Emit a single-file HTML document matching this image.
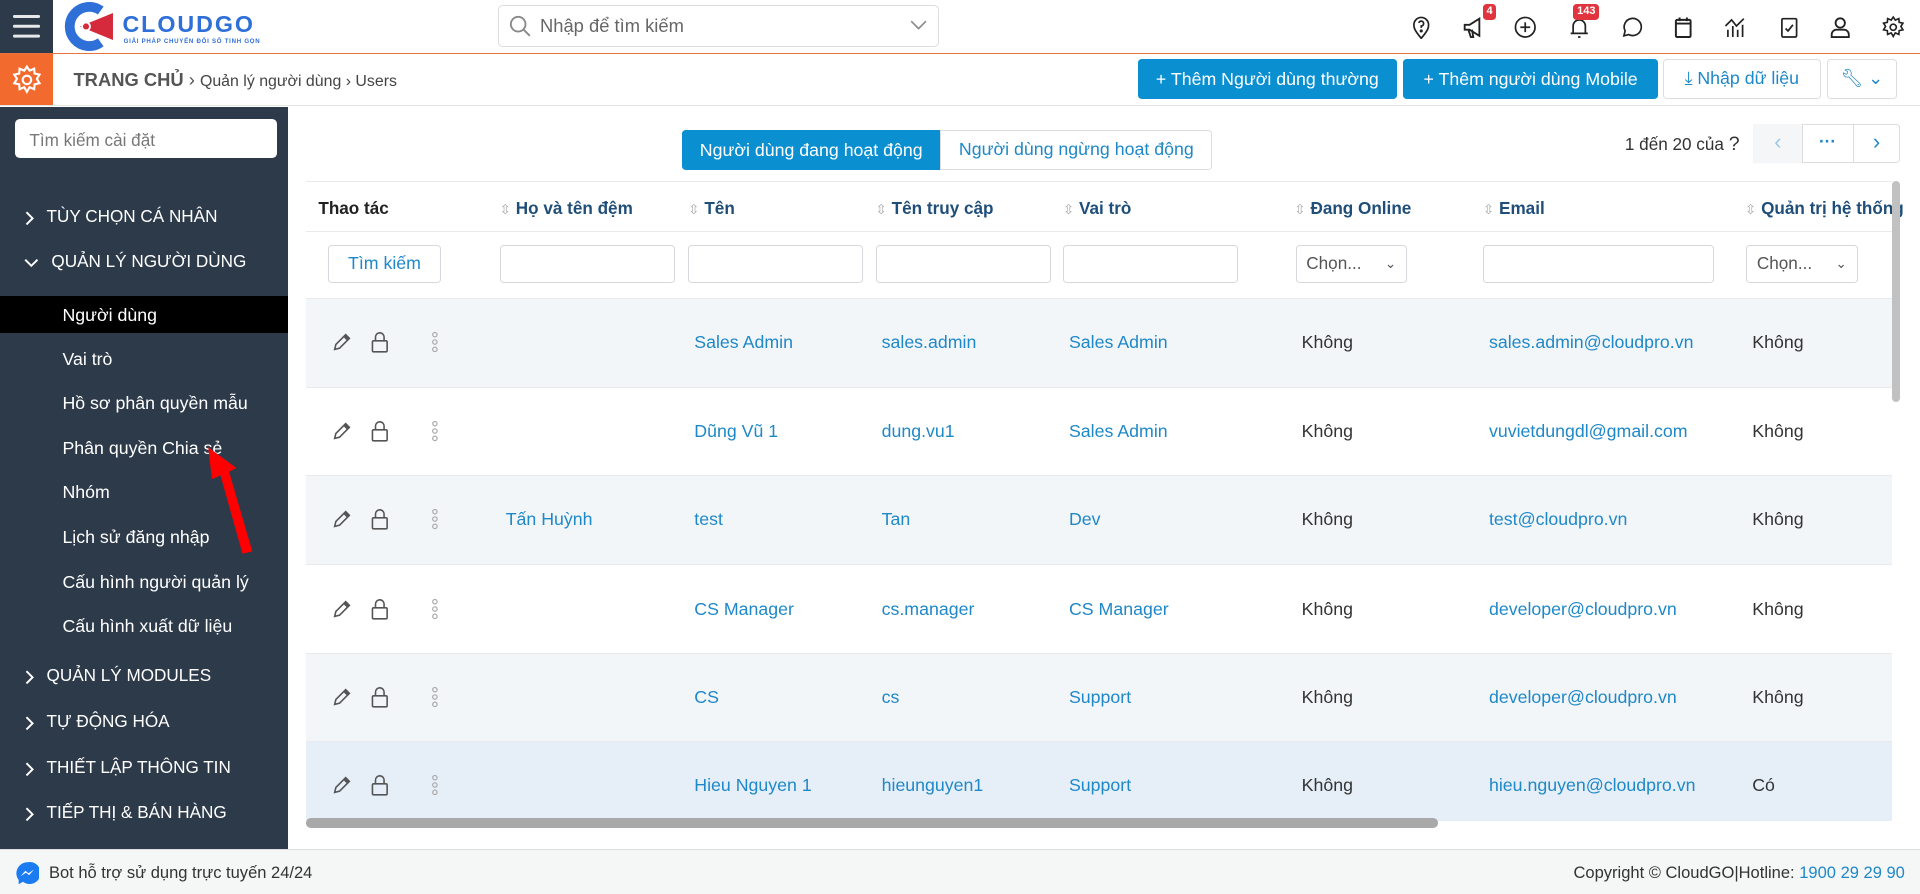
<!DOCTYPE html>
<html><head><meta charset="utf-8">
<style>
html,body{margin:0;padding:0;width:1920px;height:894px;overflow:hidden;background:#fff}
#w{position:relative;width:1568px;height:730px;zoom:1.2244898;font-family:"Liberation Sans",sans-serif;color:#333;font-size:14px}
.a{position:absolute}
.ic{position:absolute;top:12px;width:20px;height:20px}
.badge{position:absolute;background:#e0343f;color:#fff;font-size:9px;font-weight:bold;border-radius:3px;padding:1px 3px;line-height:11px}
.btn{position:absolute;top:48px;height:33px;border-radius:3px;background:#0a8fd0;color:#fff;font-size:14.5px;line-height:33px;text-align:center}
.sb{position:absolute;left:0;width:235px;color:#fff;font-size:14.5px}
.sec{position:absolute;left:38px;font-size:14px}
.chev{position:absolute;left:20px;top:4px}
.sub{position:absolute;left:51px}
.hd{position:absolute;top:162px;font-size:14px;color:#1f4e79;font-weight:bold}
.hd i{font-style:normal;color:#aaa;font-weight:normal;font-size:11px;margin-right:4px}
.inp{position:absolute;top:200px;height:31px;border:1px solid #d5d8dc;border-radius:3px;background:#fff;box-sizing:border-box}
.row{position:absolute;left:250px;width:1295px;border-top:1px solid #e8ebee}
.c{position:absolute;font-size:14.5px}
.lk{color:#1e88c8}
</style></head><body><div id="w">
<div class="a" style="left:0;top:0;width:1568px;height:43px;background:#fff;border-bottom:1px solid #e8733e"></div>
<div class="a" style="left:0;top:0;width:43px;height:43px;background:#2c3a4a"></div>
<div class="a" style="left:11px;top:12px;width:22px;height:3px;background:#e6e8ea;box-shadow:0 8px 0 #e6e8ea,0 16px 0 #e6e8ea;border-radius:1px"></div>
<svg class="a" style="left:52px;top:2px" width="42" height="40" viewBox="0 0 42 40"><path d="M30 7 A16 16 0 1 0 30 33" fill="none" stroke="#2f6fd8" stroke-width="8"/><path d="M13 20 L40 9 L40 31 Z" fill="#d42a3c"/><circle cx="18" cy="20" r="4" fill="#fff"/><circle cx="18" cy="20" r="2.5" fill="#d42a3c"/></svg>
<div class="a" style="left:100px;top:9px;font-size:19px;font-weight:bold;color:#2f6fd8;letter-spacing:1.6px">CLOUDGO</div>
<div class="a" style="left:101px;top:31px;font-size:5px;font-weight:bold;color:#2f6fd8;letter-spacing:0.6px">GIẢI PHÁP CHUYỂN ĐỔI SỐ TINH GỌN</div>
<div class="a" style="left:407px;top:4px;width:360px;height:34px;border:1px solid #ddd;border-radius:4px;box-sizing:border-box"></div>
<svg class="a" style="left:416px;top:12px" width="18" height="18" viewBox="0 0 18 18"><circle cx="7.5" cy="7.5" r="6" fill="none" stroke="#888" stroke-width="1.5"/><path d="M12 12 L17 17" stroke="#888" stroke-width="1.5"/></svg>
<div class="a" style="left:441px;top:12px;font-size:15px;color:#666">Nhập để tìm kiếm</div>
<svg class="a" style="left:743px;top:16px" width="14" height="9" viewBox="0 0 14 9"><path d="M1 1 L7 7 L13 1" fill="none" stroke="#888" stroke-width="1.3"/></svg>
<svg class="ic" style="left:1151px" viewBox="0 0 20 20" fill="none" stroke="#222" stroke-width="1.4"><path d="M10 19 C4 12 4 10 4 8 A6 6 0 0 1 16 8 C16 10 16 12 10 19Z"/><path d="M8 6.5 A2 2 0 1 1 10 9 V10.5" /><circle cx="10" cy="13" r=".6" fill="#222"/></svg>
<svg class="ic" style="left:1193px" viewBox="0 0 20 20" fill="none" stroke="#222" stroke-width="1.5"><path d="M3 8 H7 L15 3 V17 L7 12 H3 Z M6 12 L8 18 H10 L9 12"/></svg>
<span class="badge" style="left:1211px;top:3px">4</span>
<svg class="ic" style="left:1236px" viewBox="0 0 20 20" fill="none" stroke="#222" stroke-width="1.4"><circle cx="10" cy="10" r="8"/><path d="M10 6 V14 M6 10 H14"/></svg>
<svg class="ic" style="left:1280px" viewBox="0 0 20 20" fill="none" stroke="#222" stroke-width="1.4"><path d="M5 15 V9 A5 5 0 0 1 15 9 V15 H5 M3 15 H17 M9 18 H11"/></svg>
<span class="badge" style="left:1285px;top:3px">143</span>
<svg class="ic" style="left:1322px" viewBox="0 0 20 20" fill="none" stroke="#222" stroke-width="1.4"><path d="M4 17 L5 13 A7 7 0 1 1 8 16 Z"/></svg>
<svg class="ic" style="left:1365px" viewBox="0 0 20 20" fill="none" stroke="#222" stroke-width="1.6"><rect x="4" y="4" width="12" height="14" rx="1"/><path d="M4 7 H16 M7 2 V5 M13 2 V5" /></svg>
<svg class="ic" style="left:1407px" viewBox="0 0 20 20" fill="none" stroke="#222" stroke-width="1.4"><path d="M2 9 L7 4 L11 9 L17 3 M4 18 V12 M8 18 V9 M12 18 V12 M16 18 V8"/></svg>
<svg class="ic" style="left:1451px" viewBox="0 0 20 20" fill="none" stroke="#222" stroke-width="1.4"><rect x="4" y="3" width="12" height="15" rx="1"/><path d="M7 11 L9 13 L13 8"/></svg>
<svg class="ic" style="left:1493px" viewBox="0 0 20 20" fill="none" stroke="#222" stroke-width="1.5"><circle cx="10" cy="6.5" r="3.8"/><path d="M3 18 V16 A4 4 0 0 1 7 12 H13 A4 4 0 0 1 17 16 V18 Z"/></svg>
<svg class="ic" style="left:1536px" viewBox="0 0 24 24" fill="none" stroke="#222" stroke-width="1.6"><circle cx="12" cy="12" r="3"/><path d="M12 2 L14 5 L17.5 3.5 L17.8 7.2 L21.5 8 L19.5 11.2 L21.5 14.5 L17.8 15.3 L17.5 19 L14 17.5 L12 21 L10 17.5 L6.5 19 L6.2 15.3 L2.5 14.5 L4.5 11.2 L2.5 8 L6.2 7.2 L6.5 3.5 L10 5 Z"/></svg>
<div class="a" style="left:0;top:44px;width:1568px;height:42px;border-bottom:1px solid #e3e3e3"></div>
<div class="a" style="left:0;top:44px;width:43px;height:42px;background:#f26a2e"></div>
<svg class="a" style="left:9px;top:52px" width="26" height="26" viewBox="0 0 24 24" fill="none" stroke="#fff" stroke-width="1.6"><circle cx="12" cy="12" r="3.2"/><path d="M12 2 L14 5 L17.5 3.5 L17.8 7.2 L21.5 8 L19.5 11.2 L21.5 14.5 L17.8 15.3 L17.5 19 L14 17.5 L12 21 L10 17.5 L6.5 19 L6.2 15.3 L2.5 14.5 L4.5 11.2 L2.5 8 L6.2 7.2 L6.5 3.5 L10 5 Z"/></svg>
<div class="a" style="left:60px;top:56px;font-size:15px;font-weight:bold;color:#555">TRANG CHỦ <span style="font-weight:normal">›</span> <span style="font-size:13px;font-weight:normal;color:#444">Quản lý người dùng › Users</span></div>
<div class="btn" style="left:929px;width:212px">+ Thêm Người dùng thường</div>
<div class="btn" style="left:1146px;width:208px">+ Thêm người dùng Mobile</div>
<div class="btn" style="left:1358px;width:129px;background:#fff;border:1px solid #ddd;color:#1e88c8;box-sizing:border-box;line-height:31px">⤓ Nhập dữ liệu</div>
<div class="btn" style="left:1492px;width:57px;background:#fff;border:1px solid #ddd;color:#1e88c8;box-sizing:border-box;line-height:31px">🔧︎ ⌄</div>
<div class="a" style="left:0;top:87px;width:235px;height:606px;background:#2d3a4a"></div>
<div class="a" style="left:12px;top:97px;width:214px;height:32px;background:#fff;border-radius:4px"></div>
<div class="a" style="left:24px;top:106px;font-size:14px;color:#777">Tìm kiếm cài đặt</div>
<div class="sb" style="top:168px"><svg class="chev" width="10" height="12" viewBox="0 0 10 12"><path d="M2 1 L7 6 L2 11" fill="none" stroke="#fff" stroke-width="1.6"/></svg><span class="sec">TÙY CHỌN CÁ NHÂN</span></div>
<div class="sb" style="top:205px"><svg class="chev" width="12" height="12" viewBox="0 0 12 12"><path d="M1 3 L6 8 L11 3" fill="none" stroke="#fff" stroke-width="1.6"/></svg><span class="sec" style="left:42px">QUẢN LÝ NGƯỜI DÙNG</span></div>
<div class="a" style="left:0;top:242px;width:235px;height:30px;background:#000"></div>
<div class="sb" style="top:249px"><span class="sub">Người dùng</span></div>
<div class="sb" style="top:285px"><span class="sub">Vai trò</span></div>
<div class="sb" style="top:321px"><span class="sub">Hồ sơ phân quyền mẫu</span></div>
<div class="sb" style="top:358px"><span class="sub">Phân quyền Chia sẻ</span></div>
<div class="sb" style="top:394px"><span class="sub">Nhóm</span></div>
<div class="sb" style="top:430px"><span class="sub">Lịch sử đăng nhập</span></div>
<div class="sb" style="top:467px"><span class="sub">Cấu hình người quản lý</span></div>
<div class="sb" style="top:503px"><span class="sub">Cấu hình xuất dữ liệu</span></div>
<div class="sb" style="top:543px"><svg class="chev" width="10" height="12" viewBox="0 0 10 12"><path d="M2 1 L7 6 L2 11" fill="none" stroke="#fff" stroke-width="1.6"/></svg><span class="sec">QUẢN LÝ MODULES</span></div>
<div class="sb" style="top:581px"><svg class="chev" width="10" height="12" viewBox="0 0 10 12"><path d="M2 1 L7 6 L2 11" fill="none" stroke="#fff" stroke-width="1.6"/></svg><span class="sec">TỰ ĐỘNG HÓA</span></div>
<div class="sb" style="top:618px"><svg class="chev" width="10" height="12" viewBox="0 0 10 12"><path d="M2 1 L7 6 L2 11" fill="none" stroke="#fff" stroke-width="1.6"/></svg><span class="sec">THIẾT LẬP THÔNG TIN</span></div>
<div class="sb" style="top:655px"><svg class="chev" width="10" height="12" viewBox="0 0 10 12"><path d="M2 1 L7 6 L2 11" fill="none" stroke="#fff" stroke-width="1.6"/></svg><span class="sec">TIẾP THỊ &amp; BÁN HÀNG</span></div>
<svg class="a" style="left:160px;top:355px" width="50" height="100" viewBox="0 0 50 100"><path d="M10 10 L33 27 L27 30 L46 95 L38 97 L20 33 L13 36 Z" fill="#f00"/></svg>
<div class="a" style="left:557px;top:106px;width:211px;height:33px;background:#0a8fd0;border-radius:3px 0 0 3px;color:#fff;font-size:14.5px;line-height:33px;text-align:center">Người dùng đang hoạt động</div>
<div class="a" style="left:768px;top:106px;width:222px;height:33px;border:1px solid #ddd;box-sizing:border-box;border-radius:0 3px 3px 0;color:#1e88c8;font-size:14.5px;line-height:31px;text-align:center">Người dùng ngừng hoạt động</div>
<div class="a" style="left:1327px;top:109px;font-size:14px;color:#333">1 đến 20 của <span style="font-size:16px">?</span></div>
<div class="a" style="left:1432px;top:101px;width:120px;height:32px;border:1px solid #ddd;border-radius:3px;box-sizing:border-box"></div>
<div class="a" style="left:1432px;top:101px;width:40px;height:32px;background:#f4f6f8;border-right:1px solid #ddd;color:#9cc8ea;text-align:center;line-height:30px;font-size:18px">‹</div>
<div class="a" style="left:1472px;top:101px;width:41px;height:32px;border-right:1px solid #ddd;color:#1e88c8;text-align:center;line-height:28px;font-weight:bold">···</div>
<div class="a" style="left:1513px;top:101px;width:39px;height:32px;color:#1e88c8;text-align:center;line-height:30px;font-size:18px">›</div>
<div class="row" style="top:148px;height:40px"></div>
<div class="hd" style="left:260px;color:#222">Thao tác</div>
<div class="hd" style="left:408px"><i>⇳</i>Họ và tên đệm</div>
<div class="hd" style="left:562px"><i>⇳</i>Tên</div>
<div class="hd" style="left:715px"><i>⇳</i>Tên truy cập</div>
<div class="hd" style="left:868px"><i>⇳</i>Vai trò</div>
<div class="hd" style="left:1057px"><i>⇳</i>Đang Online</div>
<div class="hd" style="left:1211px"><i>⇳</i>Email</div>
<div class="hd" style="left:1425px;white-space:nowrap"><i>⇳</i>Quản trị hệ thống</div>
<div class="row" style="top:189px;height:54px"></div>
<div class="inp" style="left:268px;width:92px;color:#1e88c8;font-size:14.5px;text-align:center;line-height:29px">Tìm kiếm</div>
<div class="inp" style="left:408px;width:143px"></div>
<div class="inp" style="left:562px;width:143px"></div>
<div class="inp" style="left:715px;width:143px"></div>
<div class="inp" style="left:868px;width:143px"></div>
<div class="inp" style="left:1058px;width:91px;color:#555;font-size:14px;line-height:29px;padding-left:8px">Chọn... <span style="position:absolute;right:8px;font-size:11px">⌄</span></div>
<div class="inp" style="left:1211px;width:189px"></div>
<div class="inp" style="left:1426px;width:91px;color:#555;font-size:14px;line-height:29px;padding-left:8px">Chọn... <span style="position:absolute;right:8px;font-size:11px">⌄</span></div>
<div class="row" style="top:243px;height:72px;background:#f3f6f9"></div>
<div class="row" style="top:316px;height:72px;background:#fff"></div>
<div class="row" style="top:388px;height:72px;background:#f3f6f9"></div>
<div class="row" style="top:461px;height:72px;background:#fff"></div>
<div class="row" style="top:533px;height:72px;background:#f3f6f9"></div>
<div class="row" style="top:605px;height:65px;background:#e6eff8"></div>
<div id="rows"></div>
<script>
var d=[[280,"","Sales Admin","sales.admin","Sales Admin","sales.admin@cloudpro.vn","Không"],
[353,"","Dũng Vũ 1","dung.vu1","Sales Admin","vuvietdungdl@gmail.com","Không"],
[425,"Tấn Huỳnh","test","Tan","Dev","test@cloudpro.vn","Không"],
[498,"","CS Manager","cs.manager","CS Manager","developer@cloudpro.vn","Không"],
[570,"","CS","cs","Support","developer@cloudpro.vn","Không"],
[642,"","Hieu Nguyen 1","hieunguyen1","Support","hieu.nguyen@cloudpro.vn","Có"]];
var h="";
d.forEach(function(r){var y=r[0]-10;
h+='<svg class="a" style="left:270px;top:'+(y)+'px" width="18" height="18" viewBox="0 0 18 18" fill="none" stroke="#555" stroke-width="1.3"><path d="M3 15 L4 11 L12 3 L15 6 L7 14 Z"/><path d="M11 4 L14 7" stroke-width="2.5"/></svg>';
h+='<svg class="a" style="left:302px;top:'+(y)+'px" width="16" height="18" viewBox="0 0 16 18" fill="none" stroke="#555" stroke-width="1.3"><rect x="2" y="8" width="12" height="9" rx="1"/><path d="M4.5 8 V5 A3.5 3.5 0 0 1 11.5 5 V8"/></svg>';
h+='<svg class="a" style="left:351px;top:'+(y)+'px" width="8" height="18" viewBox="0 0 8 18" fill="none" stroke="#aaa" stroke-width="1"><circle cx="4" cy="3" r="1.8"/><circle cx="4" cy="9" r="1.8"/><circle cx="4" cy="15" r="1.8"/></svg>';
var t=r[0]-9;
h+='<div class="c lk" style="left:413px;top:'+t+'px">'+r[1]+'</div>';
h+='<div class="c lk" style="left:567px;top:'+t+'px">'+r[2]+'</div>';
h+='<div class="c lk" style="left:720px;top:'+t+'px">'+r[3]+'</div>';
h+='<div class="c lk" style="left:873px;top:'+t+'px">'+r[4]+'</div>';
h+='<div class="c" style="left:1063px;top:'+t+'px">Không</div>';
h+='<div class="c lk" style="left:1216px;top:'+t+'px">'+r[5]+'</div>';
h+='<div class="c" style="left:1431px;top:'+t+'px">'+r[6]+'</div>';});
document.getElementById("rows").outerHTML=h;
</script>
<div class="a" style="left:1545px;top:148px;width:7px;height:180px;background:#c1c1c1;border-radius:4px"></div>
<div class="a" style="left:250px;top:668px;width:924px;height:8px;background:#a9a9a9;border-radius:4px"></div>
<div class="a" style="left:0;top:693px;width:1568px;height:37px;background:#f5f6f6;border-top:1px solid #ddd"></div>
<svg class="a" style="left:12px;top:703px" width="20" height="20" viewBox="0 0 20 20"><path d="M10 1 A9 9 0 0 0 3 15.5 V19 L6.5 17 A9 9 0 1 0 10 1Z" fill="#1b7cf2"/><path d="M4.5 12.5 L8.5 8 L11 10 L15.5 7 L11.5 11.5 L9 9.5 Z" fill="#fff"/></svg>
<div class="a" style="left:40px;top:705px;font-size:13.5px;color:#333">Bot hỗ trợ sử dụng trực tuyến 24/24</div>
<div class="a" style="left:1285px;top:705px;font-size:13.5px;color:#333">Copyright © CloudGO|Hotline: <span style="color:#1e88c8">1900 29 29 90</span></div>
</div></body></html>
